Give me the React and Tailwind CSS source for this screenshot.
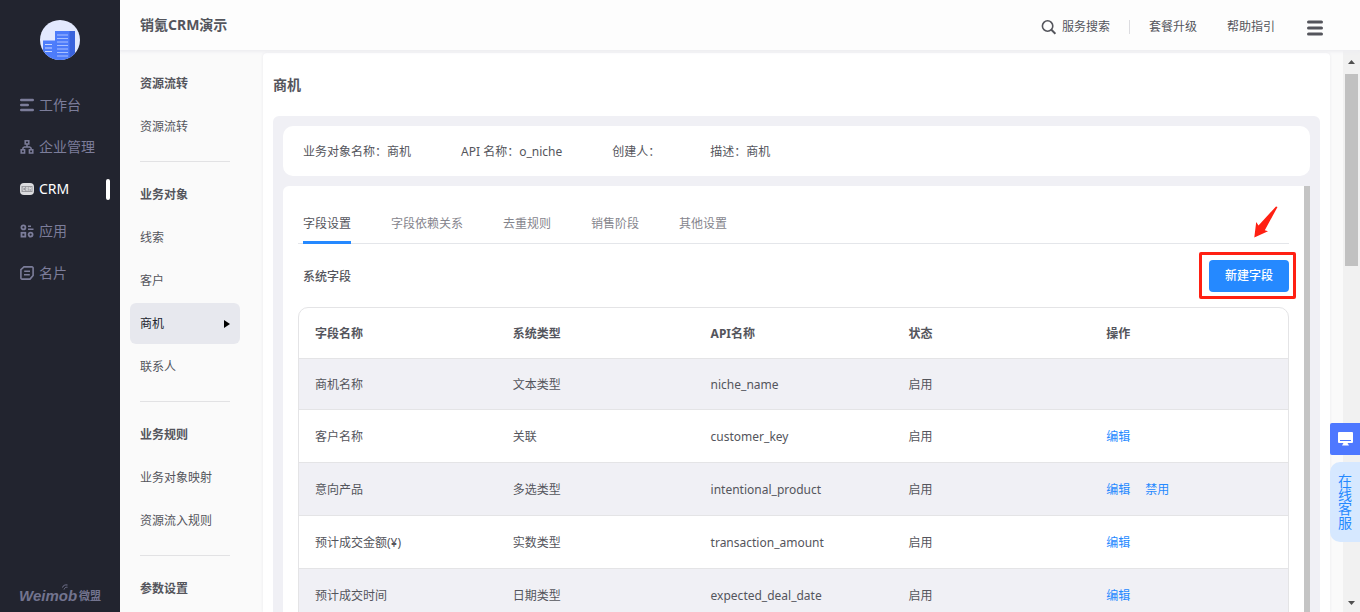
import React, { useState } from 'react';

const mainMenu = [
  { key: 'work', label: '工作台', Icon: WorkIcon },
  { key: 'company', label: '企业管理', Icon: OrgIcon },
  { key: 'crm', label: 'CRM', Icon: CrmIcon },
  { key: 'apps', label: '应用', Icon: AppsIcon },
  { key: 'card', label: '名片', Icon: CardIcon },
];

const subMenu = [
  { title: '资源流转', items: ['资源流转'] },
  { title: '业务对象', items: ['线索', '客户', '商机', '联系人'] },
  { title: '业务规则', items: ['业务对象映射', '资源流入规则'] },
  { title: '参数设置', items: [] },
];

const tabs = ['字段设置', '字段依赖关系', '去重规则', '销售阶段', '其他设置'];

const columns = ['字段名称', '系统类型', 'API名称', '状态', '操作'];

const fields = [
  { name: '商机名称', type: '文本类型', api: 'niche_name', status: '启用', actions: [] },
  { name: '客户名称', type: '关联', api: 'customer_key', status: '启用', actions: ['编辑'] },
  { name: '意向产品', type: '多选类型', api: 'intentional_product', status: '启用', actions: ['编辑', '禁用'] },
  { name: '预计成交金额(¥)', type: '实数类型', api: 'transaction_amount', status: '启用', actions: ['编辑'] },
  { name: '预计成交时间', type: '日期类型', api: 'expected_deal_date', status: '启用', actions: ['编辑'] },
];

function WorkIcon() {
  return (
    <svg width="14" height="14" viewBox="0 0 14 14" stroke="currentColor" strokeWidth="2.4" strokeLinecap="round">
      <path d="M1.2 2h11.600M1.2 7h6.600M1.2 12h11.600" />
    </svg>
  );
}

function OrgIcon() {
  return (
    <svg width="14" height="14" viewBox="0 0 14 14" fill="none" stroke="currentColor" strokeWidth="1.5">
      <rect x="5.2" y="0.8" width="3.6" height="3.2" />
      <rect x="1.2" y="9.8" width="3.4" height="3.200" />
      <rect x="9.4" y="9.8" width="3.4" height="3.200" />
      <path d="M7 4v3M2.900 9.800V8.200L4.300 7h5.400l1.400 1.200v1.600" />
    </svg>
  );
}

function CrmIcon() {
  return (
    <svg width="14" height="14" viewBox="0 0 14 14" fill="none">
      <rect x="0" y="1" width="14" height="12" rx="4" fill="#dcdcdf" />
      <rect x="1.5" y="4" width="11" height="6" fill="#98989d" />
      <path d="M5 5.4H3v3.2h2M6.2 9V5.4h1.6v1.8H6.2M7.2 7.4 8 9M9.2 9V5.2l1 1.8 1-1.8V9" stroke="#eeeeef" strokeWidth="0.7" />
    </svg>
  );
}

function AppsIcon() {
  return (
    <svg width="14" height="14" viewBox="0 0 14 14" fill="none" stroke="currentColor" strokeWidth="1.8">
      <circle cx="3.4" cy="3.4" r="2" />
      <rect x="1.500" y="8.800" width="3.800" height="3.800" />
      <circle cx="10.6" cy="10.6" r="2" />
      <path d="M8 2.2h3M8 5.2h5.500" strokeWidth="1.600" />
    </svg>
  );
}

function CardIcon() {
  return (
    <svg width="14" height="14" viewBox="0 0 14 14" fill="none" stroke="currentColor" strokeWidth="1.600">
      <path d="M4 .900H12a1.1 1.1 0 0 1 1.1 1.1v7.400L10 13.100H2A1.1 1.1 0 0 1 .9 12V3.600Z" />
      <path d="M4.200 5.2h5.800M4 8.8h5.800" />
    </svg>
  );
}

function CompanyLogo() {
  return (
    <svg width="40" height="40" viewBox="0 0 40 40">
      <defs>
        <clipPath id="logo-clip">
          <circle cx="20" cy="20" r="20" />
        </clipPath>
      </defs>
      <g clipPath="url(#logo-clip)">
        <rect width="40" height="40" fill="#e2e8fe" />
        <rect x="3" y="20.5" width="12" height="20" fill="#4e7dfb" />
        <rect x="15" y="11" width="15" height="29" fill="#4c7bfa" />
        <rect x="29.5" y="11" width="5.5" height="29" fill="#3a63dc" />
        <path d="M5 24.5h7M5 28h7M5 31.500h7" stroke="#c8d6ff" strokeWidth="1.2" />
        <path d="M17 15h11M17 18.500h11M17 22h11M17 25.500h11M17 29h11M17 32.500h11M17 36h11" stroke="#a9c0ff" strokeWidth="1.2" />
      </g>
    </svg>
  );
}

function SideBar({ active, onSelect }) {
  return (
    <aside className="relative z-20 flex w-[120px] shrink-0 flex-col bg-[#22242f]">
      <div className="flex justify-center pt-5">
        <CompanyLogo />
      </div>
      <nav className="mt-6 flex flex-col">
        {mainMenu.map(({ key, label, Icon }) => (
          <button
            key={key}
            type="button"
            onClick={() => onSelect(key)}
            className={`flex h-[42px] items-center gap-[5px] pr-[10px] pl-5 text-sm ${
              active === key ? 'text-white' : 'text-[#7c7d9a]'
            }`}
          >
            <Icon />
            <span>{label}</span>
            {active === key && <span className="ml-auto h-[21px] w-1 rounded-xs bg-white" />}
          </button>
        ))}
      </nav>
      <div className="mt-auto flex items-end gap-[2px] pb-2 pl-[19px] text-[#73748f]">
        <span className="relative font-['Liberation_Sans',sans-serif] text-[15px] leading-4 font-bold italic">
          Weimob
          <svg className="absolute -top-1 left-[43px]" width="7" height="7" viewBox="0 0 7 7" fill="none" stroke="currentColor">
            <path d="M.5 3.500C1 1.500 3 .500 5.500 1M2 5.500C2.500 3.800 3.800 3 5.500 3.200" />
          </svg>
        </span>
        <span className="text-[11px] leading-4 font-bold">微盟</span>
      </div>
    </aside>
  );
}

function Header() {
  return (
    <header className="relative z-10 flex h-[50px] shrink-0 items-center bg-[#fdfdfd] pr-[37px] pl-5 shadow-[0_1px_3px_1px_#ededf1]">
      <h1 className="text-sm font-bold">销氪CRM演示</h1>
      <div className="ml-auto flex items-center pt-1 text-xs">
        <button type="button" className="flex items-center gap-[6px]">
          <svg width="15" height="15" viewBox="0 0 15 15" fill="none" stroke="currentColor" strokeWidth="1.600">
            <circle cx="6.600" cy="6" r="5.200" />
            <path d="m10.400 9.800 4 4" strokeWidth="2" />
          </svg>
          服务搜索
        </button>
        <span className="mx-[19px] h-[14px] w-px bg-[#dcdce0]" />
        <a href="#upgrade">套餐升级</a>
        <a href="#help" className="ml-[30px]">帮助指引</a>
        <button type="button" aria-label="菜单" className="ml-8">
          <svg width="16" height="18" viewBox="0 0 16 18" stroke="currentColor" strokeWidth="3" strokeLinecap="round">
            <path d="M1.500 4h13M1.500 10h13M1.500 16h13" />
          </svg>
        </button>
      </div>
    </header>
  );
}

function SubNav({ active, onSelect }) {
  return (
    <nav className="w-[143px] shrink-0 overflow-hidden bg-[#fafafa] pt-[13px] pr-[23px] pl-[10px] text-xs">
      {subMenu.map((group, i) => (
        <div key={group.title} className="flex flex-col gap-[2px]">
          {i > 0 && <div className="mx-[10px] mt-[14px] mb-[10px] h-px bg-[#e2e2e4]" />}
          <h2 className="flex h-[41px] items-center px-[10px] font-bold">{group.title}</h2>
          {group.items.map((item) => (
            <button
              key={item}
              type="button"
              onClick={() => onSelect(item)}
              className={`flex h-[41px] items-center justify-between rounded-md px-[10px] ${
                active === item ? 'bg-[#e7e8ee] text-[#22242f]' : ''
              }`}
            >
              {item}
              {active === item && (
                <svg width="6" height="8" viewBox="0 0 6 8" fill="#000">
                  <path d="M0 0v8l6-4z" />
                </svg>
              )}
            </button>
          ))}
        </div>
      ))}
    </nav>
  );
}

function FieldTable() {
  return (
    <div className="overflow-hidden rounded-[10px] border border-[#e4e4e6]">
      <table className="w-full table-fixed border-separate border-spacing-0 text-left text-xs">
        <thead>
          <tr className="h-[51px]">
            {columns.map((col) => (
              <th key={col} className="border-b border-[#e4e4e6] px-4 pt-[2px] font-bold">{col}</th>
            ))}
          </tr>
        </thead>
        <tbody className="[&_td]:border-b [&_td]:border-[#e4e4e6] [&_td]:px-4 [&_td]:pt-[2px]">
          {fields.map((field) => (
            <tr
              key={field.api}
              className={`even:bg-white odd:bg-[#f0f0f5] ${
                field.actions.length ? 'h-[53px]' : 'h-[51px]'
              }`}
            >
              <td>{field.name}</td>
              <td>{field.type}</td>
              <td>{field.api}</td>
              <td>{field.status}</td>
              <td>
                <div className="flex gap-[15px] text-[#2589ff]">
                  {field.actions.map((action) => (
                    <button key={action} type="button">{action}</button>
                  ))}
                </div>
              </td>
            </tr>
          ))}
        </tbody>
      </table>
    </div>
  );
}

function FieldPanel() {
  const [tab, setTab] = useState(tabs[0]);

  return (
    <section className="flex min-h-0 flex-1 overflow-hidden rounded-tl-md bg-white">
      <div className="min-w-0 flex-1 pt-[17px] pr-[15px] pl-[15px]">
        <div className="flex h-[41px] gap-10 border-b border-[#e4e6ea] pl-[5px] text-xs" role="tablist">
          {tabs.map((t) => (
            <button
              key={t}
              type="button"
              role="tab"
              aria-selected={tab === t}
              onClick={() => setTab(t)}
              className={`h-[41px] border-b-[3px] pt-1 ${
                tab === t ? 'border-[#2589ff]' : 'border-transparent text-[#85858d]'
              }`}
            >
              {t}
            </button>
          ))}
        </div>
        <div className="flex items-center justify-between pt-4 pb-[15px] pl-[5px] text-xs">
          <h3 className="pt-[2px] font-medium">系统字段</h3>
          <div className="relative">
            <button type="button" className="h-8 w-20 rounded bg-[#2589ff] font-medium text-white">
              新建字段
            </button>
            {/* highlight frame with pointer */}
            <div className="pointer-events-none absolute -top-2 -right-[7px] -bottom-[7px] -left-[10px] rounded-xs border-[3px] border-[#ff2013]" />
            <svg className="absolute -top-[54px] left-[45px]" width="25" height="33" viewBox="0 0 25 33" fill="#ff2013">
              <path d="M23.500 1 22 .500 4.500 19.500 2.200 16 .300 31.500 14 25.200 10.800 24.200Z" />
            </svg>
          </div>
        </div>
        <FieldTable />
      </div>
      <div className="w-[6px] shrink-0 bg-[#c4c4c4]" />
    </section>
  );
}

function PageScrollbar() {
  return (
    <div className="flex w-[17px] shrink-0 flex-col items-center bg-[#f1f1f1] pt-2">
      <svg className="my-[2px]" width="7" height="4" viewBox="0 0 7 4" fill="#505050">
        <path d="M0 4h7L3.500 0z" />
      </svg>
      <div className="mt-2 h-48 w-[13px] bg-[#c1c1c1]" />
      <svg className="mt-auto mb-[7px]" width="7" height="4" viewBox="0 0 7 4" fill="#505050">
        <path d="M0 0h7L3.500 4z" />
      </svg>
    </div>
  );
}

function ServiceWidget() {
  return (
    <div className="fixed right-0 bottom-[70px] z-20 flex w-[30px] flex-col gap-[7px]">
      <button type="button" aria-label="消息" className="flex h-8 items-center justify-center rounded-l-xs bg-[#4e78ff]">
        <svg width="15" height="14" viewBox="0 0 15 14" fill="#fff">
          <path d="M1 0h13a1 1 0 0 1 1 1v9a1 1 0 0 1-1 1H9.500l1.500 2.500H4l1.500-2.500H1a1 1 0 0 1-1-1V1a1 1 0 0 1 1-1Z" />
          <path d="M2 8.500h11" stroke="#4e78ff" />
        </svg>
      </button>
      <button
        type="button"
        className="flex h-20 items-center justify-center rounded-l-[10px] bg-[#d6e8ff] px-2 text-sm leading-[14px] text-[#2589ff]"
      >
        在线客服
      </button>
    </div>
  );
}

export default function App() {
  const [module, setModule] = useState('crm');
  const [object, setObject] = useState('商机');

  return (
    <div className="flex h-screen overflow-hidden bg-[#fafafa] font-['Noto_Sans','Noto_Sans_CJK_SC',sans-serif] text-[#54555c]">
      <SideBar active={module} onSelect={setModule} />
      <div className="flex min-w-0 flex-1 flex-col">
        <Header />
        <div className="flex min-h-0 flex-1">
          <SubNav active={object} onSelect={setObject} />
          <main className="mt-[3px] mr-[13px] flex min-w-0 flex-1 flex-col rounded-t bg-white px-[10px] shadow-[0_0_3px_#e9e9ec]">
            <h2 className="flex h-[63px] items-center text-sm font-bold">{object}</h2>
            <div className="flex min-h-0 flex-1 flex-col gap-[10px] rounded-t-md bg-[#f0f0f5] px-[10px] pt-[10px]">
              <div className="flex h-[50px] shrink-0 items-center gap-[50px] rounded-[10px] bg-white px-5 pt-[2px] text-xs">
                <span>业务对象名称：商机</span>
                <span>API 名称：o_niche</span>
                <span>创建人：</span>
                <span>描述：商机</span>
              </div>
              <FieldPanel />
            </div>
          </main>
          <PageScrollbar />
        </div>
      </div>
      <ServiceWidget />
    </div>
  );
}
